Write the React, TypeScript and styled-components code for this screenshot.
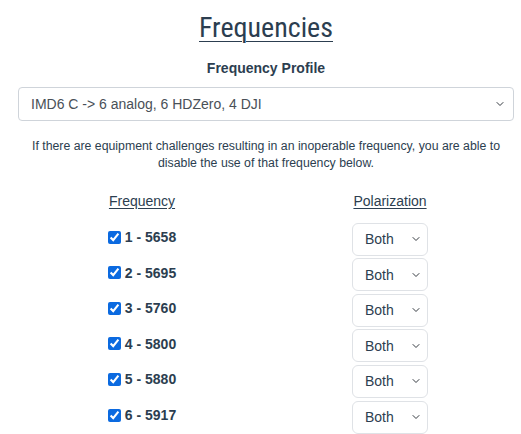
import React, { useState } from 'react';
import styled, { createGlobalStyle } from 'styled-components';

const GlobalStyle = createGlobalStyle`
  html, body {
    margin: 0;
    padding: 0;
    background: #ffffff;
  }
  body {
    font-family: "Liberation Sans", Arial, sans-serif;
    color: #2c3e50;
  }
`;

const Page = styled.div`
  padding: 0 7px 0 18px;
  display: flex;
  flex-direction: column;
  align-items: stretch;
`;

const Title = styled.h1`
  margin: 11px 0 0;
  text-align: center;
  font-family: "Roboto Condensed", "DejaVu Sans Condensed", Roboto, sans-serif;
  font-stretch: condensed;
  font-weight: 400;
  font-size: 28px;
  line-height: 34px;
  color: #2c3e50;
  text-decoration: underline;
  text-decoration-thickness: 1px;
  text-underline-offset: 4px;
`;

const Label = styled.div`
  margin-top: 14px;
  text-align: center;
  font-weight: 700;
  font-size: 14px;
  line-height: 18px;
  color: #2c3e50;
`;

const ProfileSelect = styled.select`
  margin-top: 10px;
  width: 100%;
  height: 34px;
  padding: 0 30px 0 12px;
  border: 1px solid #cfd4da;
  border-radius: 4px;
  background: #fff;
  font-family: "Liberation Sans", Arial, sans-serif;
  font-size: 14px;
  color: #495057;
  appearance: none;
  background-image: url("data:image/svg+xml,%3csvg xmlns='http://www.w3.org/2000/svg' viewBox='0 0 16 16'%3e%3cpath fill='none' stroke='%23343a40' stroke-linecap='round' stroke-linejoin='round' stroke-width='2' d='M2 5l6 6 6-6'/%3e%3c/svg%3e");
  background-repeat: no-repeat;
  background-position: right 8px center;
  background-size: 10px 8px;
`;

const Note = styled.p`
  margin: 17px 0 0;
  text-align: center;
  font-size: 12.3px;
  line-height: 17px;
  color: #2c3e50;
`;

const Table = styled.div`
  margin-top: 20px;
  display: grid;
  grid-template-columns: 1fr 1fr;
  justify-items: center;
  align-items: center;
  row-gap: 2.6px;
`;

const Head = styled.div`
  font-size: 14px;
  line-height: 18px;
  text-decoration: underline;
  text-underline-offset: 2px;
  color: #2c3e50;
  margin-bottom: 10px;
`;

const FreqLabel = styled.label`
  display: flex;
  align-items: center;
  gap: 4px;
  font-weight: 700;
  font-size: 14px;
  color: #2c3e50;
  margin-top: -4px;

  input {
    margin: 0;
    width: 13px;
    height: 13px;
    accent-color: #0b6ae0;
  }
`;

const PolSelect = styled.select`
  width: 76px;
  height: 33px;
  padding: 0 20px 0 12px;
  border: 1px solid #dfe2e6;
  border-radius: 6px;
  background: #fff;
  font-family: "Liberation Sans", Arial, sans-serif;
  font-size: 14px;
  color: #2c3e50;
  appearance: none;
  background-image: url("data:image/svg+xml,%3csvg xmlns='http://www.w3.org/2000/svg' viewBox='0 0 16 16'%3e%3cpath fill='none' stroke='%23343a40' stroke-linecap='round' stroke-linejoin='round' stroke-width='2' d='M2 5l6 6 6-6'/%3e%3c/svg%3e");
  background-repeat: no-repeat;
  background-position: right 6px center;
  background-size: 10px 8px;
`;

const frequencies = [
  { ch: 1, mhz: 5658 },
  { ch: 2, mhz: 5695 },
  { ch: 3, mhz: 5760 },
  { ch: 4, mhz: 5800 },
  { ch: 5, mhz: 5880 },
  { ch: 6, mhz: 5917 },
];

const App = () => {
  const [enabled, setEnabled] = useState<boolean[]>(frequencies.map(() => true));

  return (
    <Page>
      <GlobalStyle />
      <Title>Frequencies</Title>
      <Label>Frequency Profile</Label>
      <ProfileSelect defaultValue="imd6c">
        <option value="imd6c">IMD6 C -&gt; 6 analog, 6 HDZero, 4 DJI</option>
      </ProfileSelect>
      <Note>
        If there are equipment challenges resulting in an inoperable frequency, you are able to
        disable the use of that frequency below.
      </Note>

      <Table>
        <Head>Frequency</Head>
        <Head>Polarization</Head>
        {frequencies.map((f, i) => (
          <React.Fragment key={f.ch}>
            <FreqLabel>
              <input
                type="checkbox"
                checked={enabled[i]}
                onChange={() => setEnabled(enabled.map((v, j) => (j === i ? !v : v)))}
              />
              {f.ch} - {f.mhz}
            </FreqLabel>
            <PolSelect defaultValue="both">
              <option value="both">Both</option>
              <option value="lhcp">LHCP</option>
              <option value="rhcp">RHCP</option>
            </PolSelect>
          </React.Fragment>
        ))}
      </Table>
    </Page>
  );
};

export default App;
